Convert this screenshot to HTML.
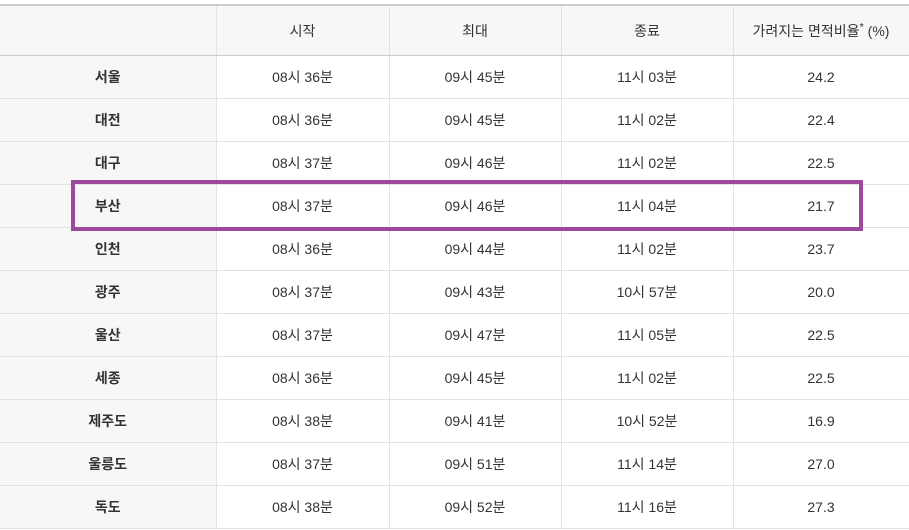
<!DOCTYPE html>
<html><head><meta charset="utf-8"><style>
body{margin:0;width:909px;height:530px;background:#fff;position:relative;overflow:hidden;font-family:"Liberation Sans","Noto Sans CJK KR",sans-serif;}
table{position:absolute;left:0;top:4px;border-collapse:collapse;table-layout:fixed;width:909px;border-top:2px solid #ccc;}
td,th{border-bottom:1px solid #e2e2e2;border-left:1px solid #e2e2e2;text-align:center;font-size:14px;color:#333;height:42px;padding:0;font-weight:normal;}
th{background:#f7f7f7;height:49px;border-bottom:1px solid #ccc;}
td.h{background:#f7f7f7;font-weight:bold;color:#333;}
tr>*:first-child{border-left:none;}
tr>*:last-child{border-right:1px solid #e2e2e2;}
sup{font-size:11px;}
.box{position:absolute;left:71px;top:180px;width:784px;height:43px;border:4px solid #9b4a9e;}
</style></head><body>
<table>
<colgroup><col style="width:216px"><col style="width:173px"><col style="width:172px"><col style="width:172px"><col style="width:176px"></colgroup>
<tr><th></th><th>시작</th><th>최대</th><th>종료</th><th>가려지는 면적비율<sup>*</sup> (%)</th></tr>
<tr><td class="h">서울</td><td>08시 36분</td><td>09시 45분</td><td>11시 03분</td><td>24.2</td></tr>
<tr><td class="h">대전</td><td>08시 36분</td><td>09시 45분</td><td>11시 02분</td><td>22.4</td></tr>
<tr><td class="h">대구</td><td>08시 37분</td><td>09시 46분</td><td>11시 02분</td><td>22.5</td></tr>
<tr><td class="h">부산</td><td>08시 37분</td><td>09시 46분</td><td>11시 04분</td><td>21.7</td></tr>
<tr><td class="h">인천</td><td>08시 36분</td><td>09시 44분</td><td>11시 02분</td><td>23.7</td></tr>
<tr><td class="h">광주</td><td>08시 37분</td><td>09시 43분</td><td>10시 57분</td><td>20.0</td></tr>
<tr><td class="h">울산</td><td>08시 37분</td><td>09시 47분</td><td>11시 05분</td><td>22.5</td></tr>
<tr><td class="h">세종</td><td>08시 36분</td><td>09시 45분</td><td>11시 02분</td><td>22.5</td></tr>
<tr><td class="h">제주도</td><td>08시 38분</td><td>09시 41분</td><td>10시 52분</td><td>16.9</td></tr>
<tr><td class="h">울릉도</td><td>08시 37분</td><td>09시 51분</td><td>11시 14분</td><td>27.0</td></tr>
<tr><td class="h">독도</td><td>08시 38분</td><td>09시 52분</td><td>11시 16분</td><td>27.3</td></tr>
</table>
<div class="box"></div>
</body></html>
